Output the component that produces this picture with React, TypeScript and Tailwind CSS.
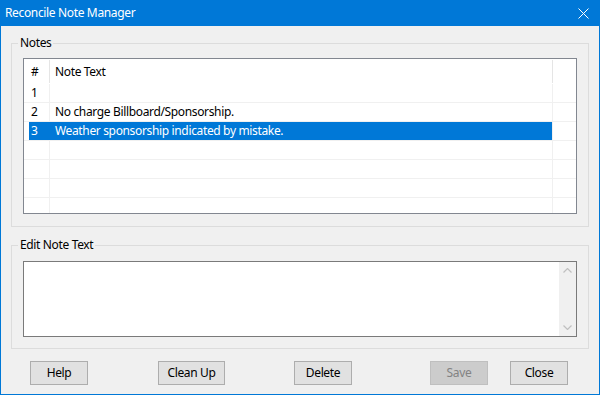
import React from 'react';

const rows = [
  { id: 1, text: '' },
  { id: 2, text: 'No charge Billboard/Sponsorship.' },
  { id: 3, text: 'Weather sponsorship indicated by mistake.' },
  { id: 0, text: '' },
  { id: 0, text: '' },
  { id: 0, text: '' },
  { id: 0, text: '' },
];

const selected = 3;

function Button({ label, width = 'w-[58px]', disabled = false, className = '' }: { label: string; width?: string; disabled?: boolean; className?: string }) {
  return (
    <div
      className={`${width} h-[24px] flex items-center justify-center border ${
        disabled ? 'bg-[#cccccc] border-[#bfbfbf] text-[#838383]' : 'bg-[#e1e1e1] border-[#adadad] text-black'
      } ${className}`}
    >
      {label}
    </div>
  );
}

export default function App() {
  return (
    <div className="w-[600px] h-[395px] flex flex-col bg-[#f0f0f0] border-x border-b border-[#0078d7] font-['Noto_Sans','DejaVu_Sans',sans-serif] text-[12px] leading-[16px] tracking-[-0.35px] text-black">
      {/* title bar */}
      <div className="h-[26px] shrink-0 bg-[#0078d7] flex items-center pl-[4px] text-white">
        <span>Reconcile Note Manager</span>
        <svg className="ml-auto mr-[10px]" width="11" height="11" viewBox="0 0 11 11">
          <path d="M0.5 0.5 L10.5 10.5 M10.5 0.5 L0.5 10.5" stroke="white" strokeWidth="1" fill="none" />
        </svg>
      </div>

      {/* notes */}
      <fieldset className="mx-[10px] mt-[9px] border border-[#dcdcdc] px-[11px] pt-[7px] pb-[12px]">
        <legend className="-ml-[5px] px-[2px] leading-[16px]">Notes</legend>
        <div className="h-[156px] border border-[#828790] bg-white flex flex-col overflow-hidden">
          <div className="h-[25px] shrink-0 flex items-center">
            <div className="w-[5px]" />
            <div className="w-[20px] pl-[2px]">#</div>
            <div className="w-px h-[23px] bg-[#e5e5e5]" />
            <div className="w-[502px] pl-[5px]">Note Text</div>
            <div className="w-px h-[23px] bg-[#e5e5e5]" />
          </div>
          {rows.map((r, i) => {
            const sel = r.id === selected;
            return (
              <div key={i} className="h-[19px] shrink-0 flex border-b border-[#f0f0f0]">
                <div className="w-[5px]" />
                <div className={`flex ${sel ? 'bg-[#0078d7] text-white' : ''}`}>
                  <div className="w-[20px] pl-[2px] flex items-center">{r.id > 0 ? r.id : ''}</div>
                  <div className={`w-px ${sel ? '' : 'bg-[#f0f0f0]'}`} />
                  <div className="w-[502px] pl-[5px] flex items-center">{r.text}</div>
                </div>
                <div className="w-px bg-[#f0f0f0]" />
              </div>
            );
          })}
        </div>
      </fieldset>

      {/* edit note text */}
      <fieldset className="mx-[10px] mt-[10px] border border-[#dcdcdc] px-[11px] pt-[8px] pb-[11px]">
        <legend className="-ml-[5px] px-[2px] leading-[16px] mt-[1px]">Edit Note Text</legend>
        <div className="h-[76px] border border-[#7a7a7a] bg-white flex">
          <div className="flex-1" />
          <div className="w-[17px] bg-[#f0f0f0] flex flex-col justify-between">
            <div className="h-[17px] flex items-center justify-center">
              <svg width="9" height="5" viewBox="0 0 9 5">
                <path d="M0.5 4.5 L4.5 0.5 L8.5 4.5" stroke="#c0c0c0" strokeWidth="1.2" fill="none" />
              </svg>
            </div>
            <div className="h-[17px] flex items-center justify-center">
              <svg width="9" height="5" viewBox="0 0 9 5">
                <path d="M0.5 0.5 L4.5 4.5 L8.5 0.5" stroke="#c0c0c0" strokeWidth="1.2" fill="none" />
              </svg>
            </div>
          </div>
        </div>
      </fieldset>

      {/* buttons */}
      <div className="flex mt-[12px] pl-[29px]">
        <Button label="Help" />
        <Button label="Clean Up" width="w-[67px]" className="ml-[70px]" />
        <Button label="Delete" className="ml-[69px]" />
        <Button label="Save" disabled className="ml-[78px]" />
        <Button label="Close" className="ml-[22px]" />
      </div>
    </div>
  );
}
